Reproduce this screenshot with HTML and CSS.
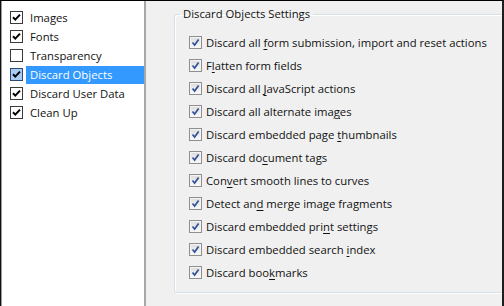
FILE: index.html
```html
<!DOCTYPE html>
<html lang="en">

<head>
    <meta charset="UTF-8">
    <meta name="viewport" content="width=device-width, initial-scale=1.0">
    <title>Discard Objects</title>
    <link rel="stylesheet" href="styles.css">
</head>

<body>
    <div class="dialog">
        <ul class="cat-list">
            <li class="cat-item"><span class="cbox"><svg viewBox="0 0 11 11"><path d="M2 5.2 L4.3 7.6 L9 2.6" /></svg></span><span class="cat-label">Images</span></li>
            <li class="cat-item"><span class="cbox"><svg viewBox="0 0 11 11"><path d="M2 5.2 L4.3 7.6 L9 2.6" /></svg></span><span class="cat-label">Fonts</span></li>
            <li class="cat-item"><span class="cbox"></span><span class="cat-label">Transparency</span></li>
            <li class="cat-item active"><span class="cbox"><svg viewBox="0 0 11 11"><path d="M2 5.2 L4.3 7.6 L9 2.6" /></svg></span><span class="cat-label">Discard Objects</span></li>
            <li class="cat-item"><span class="cbox"><svg viewBox="0 0 11 11"><path d="M2 5.2 L4.3 7.6 L9 2.6" /></svg></span><span class="cat-label">Discard User Data</span></li>
            <li class="cat-item"><span class="cbox"><svg viewBox="0 0 11 11"><path d="M2 5.2 L4.3 7.6 L9 2.6" /></svg></span><span class="cat-label">Clean Up</span></li>
        </ul>
        <div class="pane">
            <fieldset class="group">
                <legend>Discard Objects Settings</legend>
                <div class="opts">
                    <label class="opt"><span class="vbox"><svg viewBox="0 0 11 11"><path d="M2.5 5.5 L4.6 8 L8.6 2.4" /></svg></span><span>Discard all <u>f</u>orm submission, import and reset actions</span></label>
                    <label class="opt"><span class="vbox"><svg viewBox="0 0 11 11"><path d="M2.5 5.5 L4.6 8 L8.6 2.4" /></svg></span><span>F<u>l</u>atten form fields</span></label>
                    <label class="opt"><span class="vbox"><svg viewBox="0 0 11 11"><path d="M2.5 5.5 L4.6 8 L8.6 2.4" /></svg></span><span>Discard all <u>J</u>avaScript actions</span></label>
                    <label class="opt"><span class="vbox"><svg viewBox="0 0 11 11"><path d="M2.5 5.5 L4.6 8 L8.6 2.4" /></svg></span><span>Discard all alternate ima<u>g</u>es</span></label>
                    <label class="opt"><span class="vbox"><svg viewBox="0 0 11 11"><path d="M2.5 5.5 L4.6 8 L8.6 2.4" /></svg></span><span>Discard embedded page <u>t</u>humbnails</span></label>
                    <label class="opt"><span class="vbox"><svg viewBox="0 0 11 11"><path d="M2.5 5.5 L4.6 8 L8.6 2.4" /></svg></span><span>Discard do<u>c</u>ument tags</span></label>
                    <label class="opt"><span class="vbox"><svg viewBox="0 0 11 11"><path d="M2.5 5.5 L4.6 8 L8.6 2.4" /></svg></span><span>Con<u>v</u>ert smooth lines to curves</span></label>
                    <label class="opt"><span class="vbox"><svg viewBox="0 0 11 11"><path d="M2.5 5.5 L4.6 8 L8.6 2.4" /></svg></span><span>Detect an<u>d</u> merge image fragments</span></label>
                    <label class="opt"><span class="vbox"><svg viewBox="0 0 11 11"><path d="M2.5 5.5 L4.6 8 L8.6 2.4" /></svg></span><span>Discard embedded pri<u>n</u>t settings</span></label>
                    <label class="opt"><span class="vbox"><svg viewBox="0 0 11 11"><path d="M2.5 5.5 L4.6 8 L8.6 2.4" /></svg></span><span>Discard embedded search <u>i</u>ndex</span></label>
                    <label class="opt"><span class="vbox"><svg viewBox="0 0 11 11"><path d="M2.5 5.5 L4.6 8 L8.6 2.4" /></svg></span><span>Discard boo<u>k</u>marks</span></label>
                </div>
            </fieldset>
        </div>
    </div>
</body>

</html>
```

FILE: styles.css
```css
html,
body {
    margin: 0;
    padding: 0;
    background: #f0f0f0;
}

body {
    font-family: "Open Sans", "Noto Sans", sans-serif;
    font-size: 11.3px;
    color: #111;
}

.dialog {
    display: flex;
    width: 504px;
    height: 306px;
    box-sizing: border-box;
    border-top: 1px solid #000;
    border-left: 1px solid #111;
    border-right: 2px solid #1e1e1e;
    overflow: hidden;
}

/* left category list */
.cat-list {
    width: 142px;
    flex: none;
    margin: 0;
    padding: 7px 0 0 0;
    list-style: none;
    background: #fff;
    border-left: 1px solid #9a9a9a;
    border-right: 2px solid #a7a7a7;
}

.cat-item {
    display: flex;
    align-items: center;
    height: 19px;
    padding-left: 8px;
}

.cbox {
    width: 11px;
    height: 11px;
    flex: none;
    border: 1px solid #3a3a3a;
    background: #fff;
}

.cbox svg {
    display: block;
    width: 11px;
    height: 11px;
    fill: none;
    stroke: #000;
    stroke-width: 2;
}

.cat-label {
    flex: 1;
    margin-left: 3px;
    padding-left: 4px;
    line-height: 18px;
}

.cat-item.active .cat-label {
    background: #3399ff;
    color: #fff;
}

.cat-item.active .cbox {
    background: #a9cdf3;
    border-color: #2e4a73;
}

/* right settings pane */
.pane {
    flex: 1;
    overflow: hidden;
    background: #f0f0f0;
}

.group {
    margin: 5px -12px 0 28px;
    padding: 0;
    height: 287px;
    box-sizing: border-box;
    border: 1px solid #d5dfe5;
    border-radius: 3px;
    box-shadow: inset 1px 1px 0 #fff, 1px 1px 0 #fff;
}

.group legend {
    margin-left: 5px;
    padding: 0 3px;
    line-height: 16px;
}

.opts {
    display: flex;
    flex-direction: column;
    padding: 9px 0 0 14px;
}

.opt {
    display: flex;
    align-items: center;
    height: 23px;
}

.vbox {
    width: 11px;
    height: 11px;
    flex: none;
    margin-right: 4px;
    border: 1px solid #8f8f8f;
    background: linear-gradient(#dcdcdc, #fbfbfb);
    box-shadow: inset 0 0 0 1px #f4f4f4;
}

.vbox svg {
    display: block;
    width: 11px;
    height: 11px;
    fill: none;
    stroke: #34519a;
    stroke-width: 1.7;
}

.opt u {
    text-decoration-thickness: 1px;
    text-underline-offset: 2px;
}
```
